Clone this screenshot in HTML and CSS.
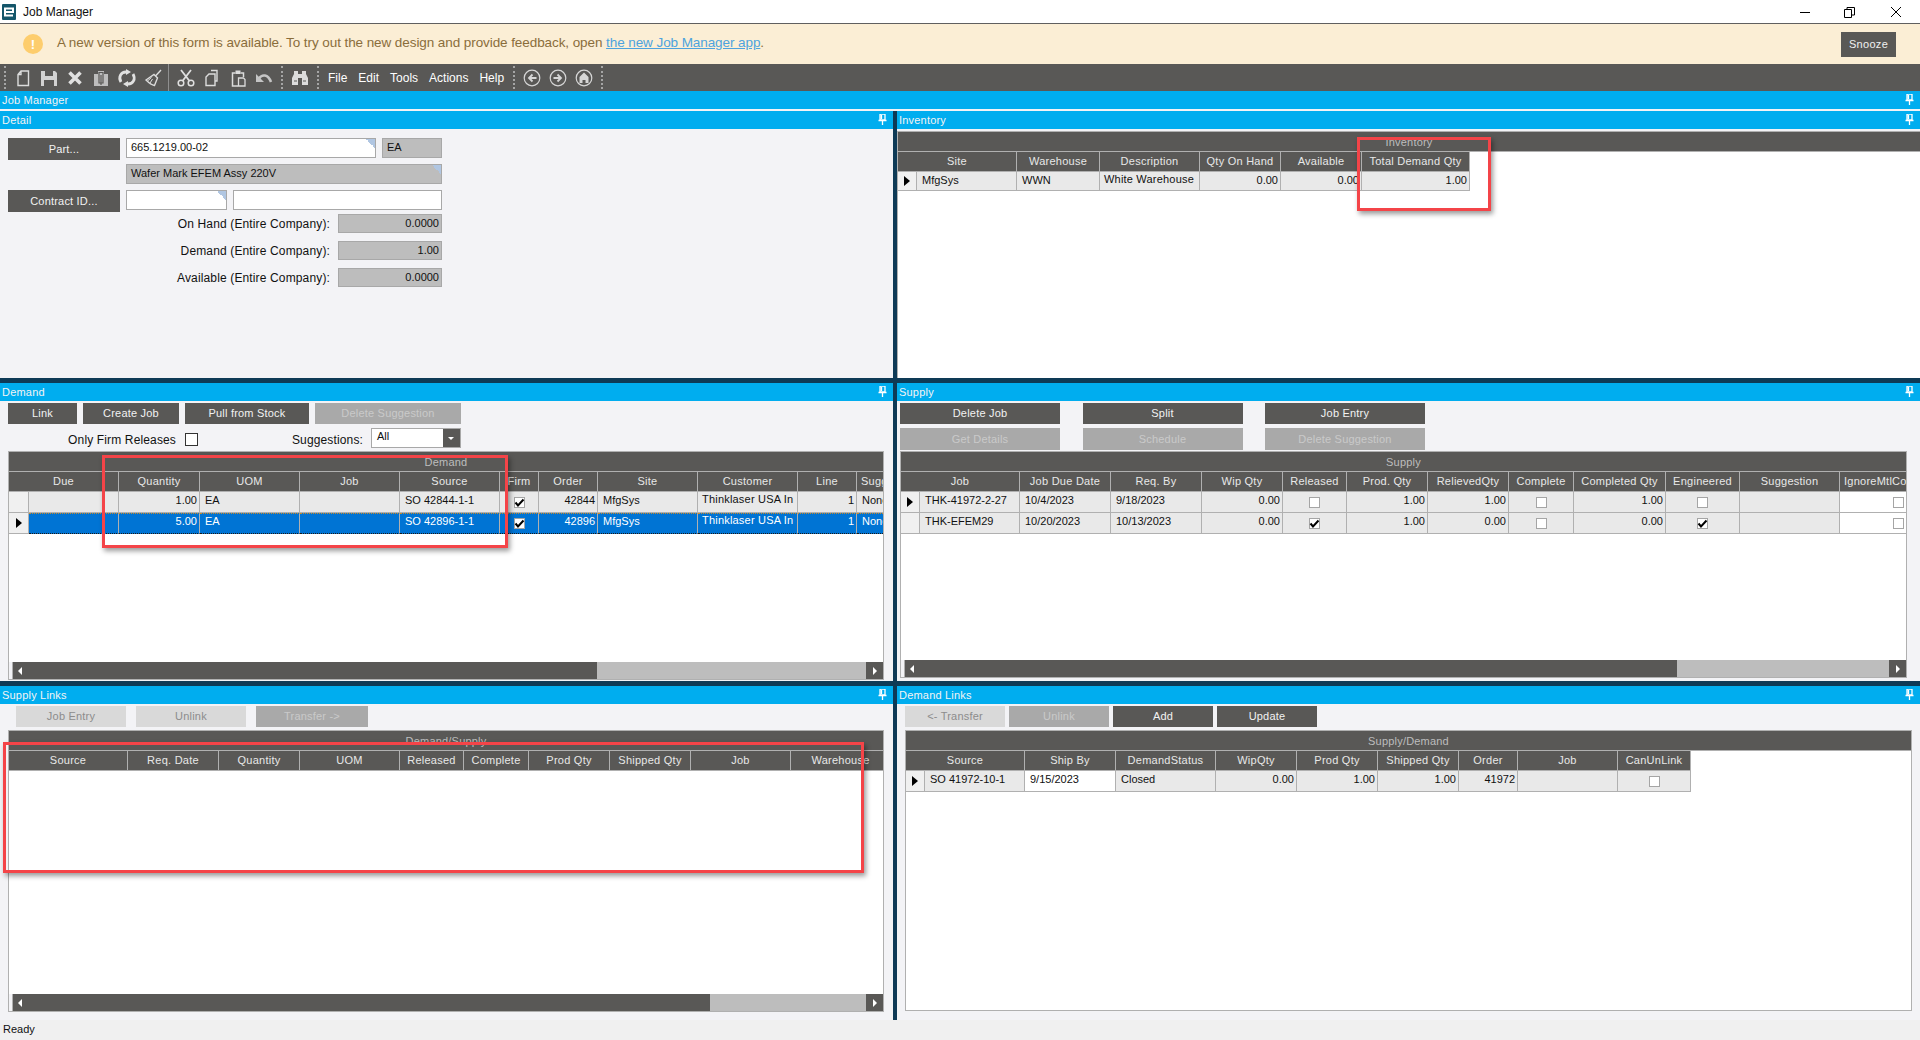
FILE: index.html
```html
<!DOCTYPE html>
<html lang="en">
<head>
<meta charset="utf-8">
<title>Job Manager</title>
<link rel="stylesheet" href="styles.css">
</head>
<body>
<svg class="defs" aria-hidden="true">
  <symbol id="pin" viewBox="0 0 9 11"><path d="M2 0h5v6H2zM3.5 1v4M0.5 6.5h8M4.5 7v4" fill="none" stroke="#fff" stroke-width="1.3"/></symbol>
  <symbol id="chk" viewBox="0 0 11 11"><path d="M1.5 5.5l2.5 3 5.5-6" fill="none" stroke="#000" stroke-width="2"/></symbol>
  <symbol id="new" viewBox="0 0 18 18"><path d="M7 2h7.500v14.500h-10.500V5.500zM7 2v3.500H4" fill="none" stroke="#dcdcdc" stroke-width="1.400"/></symbol>
  <symbol id="save" viewBox="0 0 18 18"><path d="M1 2h14l2 2v13H1zM5 2v5h8V2zM4 11v6h10v-6z" fill="#d2d2d2" fill-rule="evenodd"/></symbol>
  <symbol id="del" viewBox="0 0 18 18"><path d="M3.500 3.500l11 11M14.500 3.500l-11 11" stroke="#e0e0e0" stroke-width="3.600" fill="none"/></symbol>
  <symbol id="clip" viewBox="0 0 18 18"><path d="M2 5h4V2h6v3h4v12H2z" fill="#bdbdbd"/><path d="M7 3.500h4v10.500H7zM9 6v10" fill="none" stroke="#595856" stroke-width="1.200"/></symbol>
  <symbol id="ref" viewBox="0 0 18 18"><path d="M3 13C0 8 3 3 8 3M15 5c3 5 0 10-5 10" fill="none" stroke="#e0e0e0" stroke-width="2.800"/><path d="M8 0l5 3-5 3zM10 12l-5 3 5 3z" fill="#e0e0e0"/></symbol>
  <symbol id="broom" viewBox="0 0 18 18"><path d="M17 1l-5.500 6M10 5.500l3.500 3.500-3 7.500c-3-.5-6-3-8.500-5.500z" fill="none" stroke="#dcdcdc" stroke-width="1.400"/><path d="M6 14l2.500-4M3.500 12l4-3.500" stroke="#dcdcdc" fill="none"/></symbol>
  <symbol id="cut" viewBox="0 0 18 18"><path d="M4 1l8.500 11M14 1L5.500 12" stroke="#e0e0e0" stroke-width="1.800" fill="none"/><circle cx="4" cy="14" r="2.800" fill="none" stroke="#e0e0e0" stroke-width="1.500"/><circle cx="14" cy="14" r="2.800" fill="none" stroke="#e0e0e0" stroke-width="1.500"/></symbol>
  <symbol id="copy" viewBox="0 0 18 18"><path d="M8 1.500h6v10.500h-2M6 5h6v11.500H3V8z" fill="none" stroke="#dcdcdc" stroke-width="1.400"/></symbol>
  <symbol id="paste" viewBox="0 0 18 18"><path d="M6.500 4H3.500v13H9M11.500 4h3v4" fill="none" stroke="#dcdcdc" stroke-width="1.500"/><path d="M6.500 1.500h5V5h-5z" fill="#dcdcdc"/><path d="M9.500 9h5l1.500 1.500V17H9.500z" fill="none" stroke="#dcdcdc" stroke-width="1.300"/></symbol>
  <symbol id="undo" viewBox="0 0 18 18"><path d="M4 9.500C7 5 13 5 16 13" fill="none" stroke="#c4c4c4" stroke-width="2.600"/><path d="M1 5v8h8z" fill="#c4c4c4"/></symbol>
  <symbol id="bino" viewBox="0 0 18 18"><path d="M3 2h4v3h4V2h4v3l2 4v7h-6V9H7v7H1V9l2-4z" fill="#dcdcdc"/><path d="M3 12h3M12 12h3" stroke="#595856"/></symbol>
  <symbol id="back" viewBox="0 0 18 18"><circle cx="9" cy="9" r="7.800" fill="none" stroke="#d6d6d6" stroke-width="1.200"/><path d="M13.500 9H7M9.500 5.500L6 9l3.500 3.500" fill="none" stroke="#d6d6d6" stroke-width="1.800"/></symbol>
  <symbol id="fwd" viewBox="0 0 18 18"><circle cx="9" cy="9" r="7.800" fill="none" stroke="#d6d6d6" stroke-width="1.200"/><path d="M4.500 9H11M8.500 5.500L12 9l-3.500 3.500" fill="none" stroke="#d6d6d6" stroke-width="1.800"/></symbol>
  <symbol id="home" viewBox="0 0 18 18"><circle cx="9" cy="9" r="7.800" fill="none" stroke="#d6d6d6" stroke-width="1.200"/><path d="M9 3.500l4.500 4.500V14H10.500v-3h-3v3H4.500V8z" fill="#d6d6d6"/></symbol>
</svg>

<header class="titlebar">
  <svg class="applogo" viewBox="0 0 14 16"><rect width="14" height="16" rx="1" fill="#14566a"/><path d="M3 8h8V4.500H3v7h8" fill="none" stroke="#fff" stroke-width="2"/></svg>
  <span class="apptitle">Job Manager</span>
  <div class="winbtns">
    <svg class="winbtn" viewBox="0 0 46 16"><path d="M18 8.500h10" stroke="#000" fill="none"/></svg>
    <svg class="winbtn" viewBox="0 0 46 16"><path d="M16.500 5.500h7v8h-7zM19 5V3.500h7.500V11H24" stroke="#000" fill="none"/></svg>
    <svg class="winbtn" viewBox="0 0 46 16"><path d="M17 3l10 10M27 3L17 13" stroke="#000" fill="none"/></svg>
  </div>
</header>

<div class="banner">
  <span class="warn">!</span>
  <p class="bannertext">A new version of this form is available. To try out the new design and provide feedback, open <a class="bannerlink" href="#">the new Job Manager app</a>.</p>
  <button class="snooze">Snooze</button>
</div>

<nav class="toolbar">
  <i class="grip"></i>
  <svg class="ti"><use href="#new"/></svg><svg class="ti"><use href="#save"/></svg><svg class="ti"><use href="#del"/></svg><svg class="ti"><use href="#clip"/></svg><svg class="ti"><use href="#ref"/></svg><svg class="ti"><use href="#broom"/></svg>
  <i class="sep"></i>
  <svg class="ti"><use href="#cut"/></svg><svg class="ti"><use href="#copy"/></svg><svg class="ti"><use href="#paste"/></svg><svg class="ti"><use href="#undo"/></svg>
  <i class="grip"></i>
  <svg class="ti"><use href="#bino"/></svg>
  <i class="grip"></i>
  <div class="menu"><span>File</span><span>Edit</span><span>Tools</span><span>Actions</span><span>Help</span></div>
  <i class="grip"></i>
  <svg class="ti"><use href="#back"/></svg><svg class="ti"><use href="#fwd"/></svg><svg class="ti"><use href="#home"/></svg>
  <i class="grip"></i>
</nav>

<div class="bar jobbar"><span>Job Manager</span><svg class="pin"><use href="#pin"/></svg></div>

<main class="docks">
  <section class="panel">
    <div class="bar"><span>Detail</span><svg class="pin"><use href="#pin"/></svg></div>
    <div class="detail">
      <div class="form">
        <button class="btn">Part...</button>
        <div class="field corner span2">665.1219.00-02</div>
        <div class="field ro">EA</div>
        <div class="field ro corner desc">Wafer Mark EFEM Assy 220V</div>
        <button class="btn">Contract ID...</button>
        <div class="field corner"></div>
        <div class="field span2"></div>
      </div>
      <div class="stats">
        <div class="stat"><span>On Hand (Entire Company):</span><div class="val">0.0000</div></div>
        <div class="stat"><span>Demand (Entire Company):</span><div class="val">1.00</div></div>
        <div class="stat"><span>Available (Entire Company):</span><div class="val">0.0000</div></div>
      </div>
    </div>
  </section>

  <section class="panel">
    <div class="bar"><span>Inventory</span><svg class="pin"><use href="#pin"/></svg></div>
    <div class="body inv-body">
      <div class="grid">
        <div class="group">Inventory</div>
        <div class="row head inv-cols"><div class="c two">Site</div><div class="c">Warehouse</div><div class="c">Description</div><div class="c">Qty On Hand</div><div class="c">Available</div><div class="c">Total Demand Qty</div></div>
        <div class="row short inv-cols"><div class="c rh"><i class="tri"></i></div><div class="c">MfgSys</div><div class="c">WWN</div><div class="c up">White Warehouse</div><div class="c r">0.00</div><div class="c r">0.00</div><div class="c r">1.00</div></div>
      </div>
    </div>
  </section>

  <section class="panel">
    <div class="bar"><span>Demand</span><svg class="pin"><use href="#pin"/></svg></div>
    <div class="body demand-body">
      <div class="btnrow">
        <button class="btn w69">Link</button><button class="btn w96">Create Job</button><button class="btn w124">Pull from Stock</button><button class="btn off w146">Delete Suggestion</button>
      </div>
      <div class="filters">
        <label class="lbl firm">Only Firm Releases</label><span class="cb big"></span>
        <label class="lbl sugg">Suggestions:</label>
        <div class="combo"><span>All</span><i class="drop"></i></div>
      </div>
      <div class="grid fill">
        <div class="group">Demand</div>
        <div class="row head dem-cols"><div class="c two">Due</div><div class="c">Quantity</div><div class="c">UOM</div><div class="c">Job</div><div class="c">Source</div><div class="c">Firm</div><div class="c">Order</div><div class="c">Site</div><div class="c">Customer</div><div class="c">Line</div><div class="c l">Suggestion</div></div>
        <div class="row dem-cols"><div class="c rh"></div><div class="c"></div><div class="c r">1.00</div><div class="c">EA</div><div class="c"></div><div class="c">SO 42844-1-1</div><div class="c m"><span class="cb"><svg class="tick"><use href="#chk"/></svg></span></div><div class="c r">42844</div><div class="c">MfgSys</div><div class="c up">Thinklaser USA In</div><div class="c r">1</div><div class="c">None</div></div>
        <div class="row sel dem-cols"><div class="c rh"><i class="tri"></i></div><div class="c"></div><div class="c r">5.00</div><div class="c">EA</div><div class="c"></div><div class="c">SO 42896-1-1</div><div class="c m"><span class="cb"><svg class="tick"><use href="#chk"/></svg></span></div><div class="c r">42896</div><div class="c">MfgSys</div><div class="c up">Thinklaser USA In</div><div class="c r">1</div><div class="c">None</div></div>
        <div class="spacer"></div>
        <div class="scroll"><i class="sb-cap"></i><div class="thumb t-dem"><i class="al"></i></div><div class="track"></div><div class="arrow"><i class="ar"></i></div></div>
      </div>
    </div>
  </section>

  <section class="panel">
    <div class="bar"><span>Supply</span><svg class="pin"><use href="#pin"/></svg></div>
    <div class="body supply-body">
      <div class="btngrid">
        <button class="btn">Delete Job</button><button class="btn">Split</button><button class="btn">Job Entry</button>
        <button class="btn off">Get Details</button><button class="btn off">Schedule</button><button class="btn off">Delete Suggestion</button>
      </div>
      <div class="grid fill">
        <div class="group">Supply</div>
        <div class="row head sup-cols"><div class="c two">Job</div><div class="c">Job Due Date</div><div class="c">Req. By</div><div class="c">Wip Qty</div><div class="c">Released</div><div class="c">Prod. Qty</div><div class="c">RelievedQty</div><div class="c">Complete</div><div class="c">Completed Qty</div><div class="c">Engineered</div><div class="c">Suggestion</div><div class="c l">IgnoreMtlConstraints</div></div>
        <div class="row sup-cols"><div class="c rh"><i class="tri"></i></div><div class="c">THK-41972-2-27</div><div class="c">10/4/2023</div><div class="c">9/18/2023</div><div class="c r">0.00</div><div class="c m"><span class="cb"></span></div><div class="c r">1.00</div><div class="c r">1.00</div><div class="c m"><span class="cb"></span></div><div class="c r">1.00</div><div class="c m"><span class="cb"></span></div><div class="c"></div><div class="c w e"><span class="cb"></span></div></div>
        <div class="row sup-cols"><div class="c rh"></div><div class="c">THK-EFEM29</div><div class="c">10/20/2023</div><div class="c">10/13/2023</div><div class="c r">0.00</div><div class="c m"><span class="cb"><svg class="tick"><use href="#chk"/></svg></span></div><div class="c r">1.00</div><div class="c r">0.00</div><div class="c m"><span class="cb"></span></div><div class="c r">0.00</div><div class="c m"><span class="cb"><svg class="tick"><use href="#chk"/></svg></span></div><div class="c"></div><div class="c w e"><span class="cb"></span></div></div>
        <div class="spacer"></div>
        <div class="scroll"><i class="sb-cap"></i><div class="thumb t-sup"><i class="al"></i></div><div class="track"></div><div class="arrow"><i class="ar"></i></div></div>
      </div>
    </div>
  </section>

  <section class="panel">
    <div class="bar"><span>Supply Links</span><svg class="pin"><use href="#pin"/></svg></div>
    <div class="body links-body">
      <div class="btnrow tight">
        <button class="btn faint w110">Job Entry</button><button class="btn faint w110">Unlink</button><button class="btn off w112">Transfer -&gt;</button>
      </div>
      <div class="grid fill">
        <div class="group">Demand/Supply</div>
        <div class="row head sl-cols"><div class="c">Source</div><div class="c">Req. Date</div><div class="c">Quantity</div><div class="c">UOM</div><div class="c">Released</div><div class="c">Complete</div><div class="c">Prod Qty</div><div class="c">Shipped Qty</div><div class="c">Job</div><div class="c">Warehouse</div></div>
        <div class="spacer"></div>
        <div class="scroll"><i class="sb-cap"></i><div class="thumb t-sl"><i class="al"></i></div><div class="track"></div><div class="arrow"><i class="ar"></i></div></div>
      </div>
    </div>
  </section>

  <section class="panel">
    <div class="bar"><span>Demand Links</span><svg class="pin"><use href="#pin"/></svg></div>
    <div class="body dlinks-body">
      <div class="btnrow tight small">
        <button class="btn faint w100">&lt;- Transfer</button><button class="btn off w100">Unlink</button><button class="btn w100">Add</button><button class="btn w100">Update</button>
      </div>
      <div class="grid fill">
        <div class="group">Supply/Demand</div>
        <div class="row head dl-cols"><div class="c two">Source</div><div class="c">Ship By</div><div class="c">DemandStatus</div><div class="c">WipQty</div><div class="c">Prod Qty</div><div class="c">Shipped Qty</div><div class="c">Order</div><div class="c">Job</div><div class="c">CanUnLink</div></div>
        <div class="row dl-cols"><div class="c rh"><i class="tri"></i></div><div class="c">SO 41972-10-1</div><div class="c w">9/15/2023</div><div class="c">Closed</div><div class="c r">0.00</div><div class="c r">1.00</div><div class="c r">1.00</div><div class="c r">41972</div><div class="c"></div><div class="c m"><span class="cb"></span></div></div>
        <div class="spacer"></div>
      </div>
    </div>
  </section>
</main>

<footer class="status">Ready</footer>

<div class="mark mark-inv"></div>
<div class="mark mark-dem"></div>
<div class="mark mark-sl"></div>
</body>
</html>
```

FILE: styles.css
```css
* { box-sizing: border-box; }
html, body { margin: 0; padding: 0; }
body {
  width: 1920px; height: 1040px; overflow: hidden; position: relative;
  display: flex; flex-direction: column;
  font-family: "Liberation Sans", Arial, sans-serif; font-size: 11px; color: #111;
  background: #f3f3f6;
}
.defs { position: absolute; width: 0; height: 0; }
i { display: block; font-style: normal; }

/* window chrome */
.titlebar { height: 24px; flex: none; display: flex; align-items: center; background: #fff; border-bottom: 1px solid #5f5f5f; padding-left: 2px; }
.applogo { width: 14px; height: 16px; }
.apptitle { margin-left: 7px; font-size: 12px; color: #111; }
.winbtns { margin-left: auto; display: flex; padding-right: 0; }
.winbtn { width: 46px; height: 16px; display: block; }

.banner { height: 40px; flex: none; display: flex; align-items: center; background: #fbeed5; padding: 0 24px 0 23px; }
.warn { width: 20px; height: 20px; border-radius: 50%; background: #fdcd6d; color: #fff; font-size: 13px; font-weight: bold; display: flex; align-items: center; justify-content: center; }
.bannertext { margin: 0 0 3px 14px; font-size: 13.5px; color: #8a6d3b; flex: 1; letter-spacing: -.08px; }
.bannerlink { color: #4da3de; text-decoration: underline; }
.snooze { width: 55px; height: 25px; border: 0; padding: 0; background: #595856; color: #f0f0f0; font: 11px "Liberation Sans", Arial, sans-serif; letter-spacing: .3px; }

.toolbar { height: 27px; flex: none; display: flex; align-items: center; background: #595856; padding-left: 4px; }
.grip { width: 2px; height: 23px; border-left: 2px dotted #a5a5a5; margin: 0 4px 0 4px; }
.toolbar > .grip:first-child { margin-left: 0; }
.sep { width: 1px; height: 27px; background: #8f8f8f; margin: 0 4px 0 2px; }
.ti { width: 26px; height: 18px; display: block; }
.menu { display: flex; gap: 11px; margin: 0 5px 0 5px; color: #fff; font-size: 12px; }

/* panels */
.bar { height: 18px; flex: none; display: flex; align-items: center; justify-content: space-between; background: #00adef; color: #f4f4f4; font-size: 11px; letter-spacing: .2px; padding: 0 6px 1px 2px; }
.jobbar { margin-bottom: 2px; }
.pin { width: 9px; height: 11px; display: block; }
.docks { flex: 1; min-height: 0; display: grid; grid-template-columns: 893px 1023px; grid-template-rows: 267px 298px 334px; gap: 5px 4px; background: #0e3a56; }
.panel { display: flex; flex-direction: column; min-height: 0; min-width: 0; background: #f3f3f6; }
.body { flex: 1; min-height: 0; display: flex; flex-direction: column; }
.status { height: 20px; flex: none; background: #f0f0f0; padding: 3px 0 0 3px; font-size: 11px; }

/* buttons */
button { font-family: inherit; }
.btn { height: 22px; border: 0; padding: 0 0 1px; background: #595856; color: #f2f2f2; font-size: 11px; letter-spacing: .2px; }
.btn.off { background: #a9a9a9; color: #c9c9c9; }
.btn.faint { background: #d9d9d9; color: #8c8c8c; }
.btnrow { display: flex; gap: 6px; padding: 2px 0 0 8px; }
.btnrow .btn { height: 21px; }
.btnrow.tight { gap: 10px; padding-left: 16px; }
.btnrow.small { gap: 4px; padding-left: 8px; }
.w69 { width: 69px; } .w96 { width: 96px; } .w124 { width: 124px; } .w146 { width: 146px; }
.w100 { width: 100px; } .w110 { width: 110px; } .w112 { width: 112px; }
.btngrid { display: grid; grid-template-columns: repeat(3, 160px); grid-template-rows: 21px 22px; column-gap: 22.500px; row-gap: 4px; padding: 2px 0 0 3px; }
.btngrid .btn { height: auto; }

/* detail */
.detail { flex: 1; padding: 9px 0 0 8px; }
.form { display: grid; grid-template-columns: 112px 101px 143px 60px; column-gap: 6px; row-gap: 4px; width: 434px; }
.field { height: 20px; border: 1px solid #a8a8a8; background: #fff; padding: 2px 4px; font-size: 11px; line-height: 13px; letter-spacing: 0; }
.span2 { grid-column: span 2; }
.ro { background: #bdbdbd; }
.desc { grid-column: 2 / span 3; }
.corner { background-image: linear-gradient(225deg, #b0c6e2 50%, transparent 50%); background-repeat: no-repeat; background-position: top right; background-size: 9px 9px; }
.form .btn { align-self: start; }
.form .btn:nth-of-type(2) { margin-top: 2px; }
.form .btn:nth-of-type(2) ~ .field { margin-top: 2px; }
.stats { width: 434px; display: flex; flex-direction: column; gap: 8px; margin-top: 2px; }
.stat { display: flex; justify-content: flex-end; align-items: center; gap: 8px; height: 19px; font-size: 12px; letter-spacing: .14px; }
.val { width: 104px; height: 19px; border: 1px solid #a8a8a8; background: #bdbdbd; text-align: right; font-size: 11px; letter-spacing: 0; padding: 2px 2px 0 0; }

/* data grids */
.grid { background: #fff; border: 1px solid #b0b0b0; border-right: 0; border-bottom: 0; overflow: hidden; display: flex; flex-direction: column; flex: 1; min-height: 0; position: relative; }
.grid.fill { border-right: 1px solid #b0b0b0; border-bottom: 1px solid #b0b0b0; }
.group { height: 20px; flex: none; background: #595856; border-bottom: 1px solid #b0b0b0; color: #bdbdbd; text-align: center; padding-top: 3px; letter-spacing: .2px; line-height: 14px; }
.row { display: grid; height: 21px; flex: none; }
.row.head { height: 20px; }
.row.short { height: 19px; }
.c { display: flex; align-items: center; padding: 0 2px 4px 5px; background: #e9e9e9; border-right: 1px solid #b0b0b0; border-bottom: 1px solid #b0b0b0; white-space: nowrap; overflow: hidden; line-height: 13px; }
.row.short .c { padding-bottom: 1px; }
.c.r { justify-content: flex-end; }
.c.m { justify-content: center; padding: 0; }
.c.e { justify-content: flex-end; padding: 0 2px 0 0; }
.c.w { background: #fff; }
.c.up { padding-bottom: 6px; padding-left: 4px; letter-spacing: .2px; }
.row.short .c.up { padding-bottom: 3px; }
.c.rh { background: #f0f0f0; padding: 0; justify-content: center; }
.head .c { background: #595856; color: #e8e8e8; justify-content: center; letter-spacing: .25px; padding: 0 0 1px; }
.head .c.l { justify-content: flex-start; padding-left: 4px; }
.two { grid-column: span 2; }
.sel .c { background: #0074d4; color: #fff; border-top: 1px dotted #c98a2a; border-bottom: 1px dotted #1a1a1a; padding-bottom: 5px; }
.sel .c.up { padding-bottom: 7px; }
.sel .c.m { padding: 0; }
.sel .c.rh { background: #f0f0f0; border-top: 0; border-bottom: 1px solid #b0b0b0; padding: 0; }
.tri { width: 0; height: 0; border-left: 6px solid #000; border-top: 5px solid transparent; border-bottom: 5px solid transparent; }
.cb { width: 11px; height: 11px; display: block; background: #fff; border: 1px solid #a5a5a5; position: relative; flex: none; }
.cb.big { width: 13px; height: 13px; border-color: #333; margin: 4px 0 0; }
.tick { position: absolute; left: -1px; top: -1px; width: 11px; height: 11px; display: block; }
.spacer { flex: 1; min-height: 0; }

.inv-cols { grid-template-columns: 19px 100px 83px 100px 81px 81px 108px; width: 573px; }
.dem-cols { grid-template-columns: 20px 90px 81px 100px 100px 100px 39px 59px 100px 100px 59px 100px; width: 948px; }
.sup-cols { grid-template-columns: 19px 100px 91px 91px 81px 64px 81px 81px 65px 92px 74px 100px 67px; width: 1006px; }
.sl-cols { grid-template-columns: 119px 91px 81px 100px 64px 65px 81px 81px 100px 100px; width: 882px; }
.dl-cols { grid-template-columns: 19px 100px 91px 100px 81px 81px 81px 59px 100px 73px; width: 785px; }

.inv-body { padding-top: 2px; }
.demand-body .grid { margin: 3px 9px 1px 8px; }
.supply-body .grid { margin: 1px 13px 3px 3px; }
.links-body { padding-bottom: 8px; }
.links-body .grid { margin: 3px 9px 0 8px; }
.dlinks-body { padding-bottom: 9px; }
.dlinks-body .grid { margin: 3px 8px 0 8px; }

.filters { display: flex; align-items: center; height: 21px; margin-top: 3px; }
.lbl { text-align: right; font-size: 12px; letter-spacing: .14px; padding-top: 5px; }
.firm { width: 176px; margin-right: 9px; }
.sugg { width: 165px; margin-right: 8px; }
.combo { width: 90px; height: 20px; border: 1px solid #a8a8a8; background: #fff; display: flex; justify-content: space-between; padding-left: 5px; line-height: 14px; }
.drop { width: 17px; height: 18px; background: #595856; position: relative; }
.drop::after { content: ""; position: absolute; left: 5px; top: 8px; border-top: 3px solid #fff; border-left: 3px solid transparent; border-right: 3px solid transparent; }

.scroll { height: 17px; flex: none; display: flex; background: #bdbdbd; }
.sb-cap { width: 4px; background: #f3f3f6; border-right: 1px solid #b0b0b0; }
.thumb { background: #595856; display: flex; align-items: center; padding-left: 5px; }
.t-dem { width: 584px; }
.t-sup { width: 772px; }
.t-sl { width: 697px; }
.track { flex: 1; background: #bdbdbd; }
.arrow { width: 17px; background: #595856; display: flex; align-items: center; justify-content: center; }
.al { border-right: 4px solid #fff; border-top: 4px solid transparent; border-bottom: 4px solid transparent; }
.ar { border-left: 4px solid #fff; border-top: 4px solid transparent; border-bottom: 4px solid transparent; }

/* red annotations drawn over the screenshot */
.mark { position: absolute; border: 3px solid #f44448; box-shadow: 2px 3px 5px rgba(0, 0, 0, .4); }
.mark-inv { left: 1357px; top: 137px; width: 134px; height: 74px; }
.mark-dem { left: 102px; top: 455px; width: 406px; height: 93px; }
.mark-sl { left: 3px; top: 742px; width: 861px; height: 131px; }
```
